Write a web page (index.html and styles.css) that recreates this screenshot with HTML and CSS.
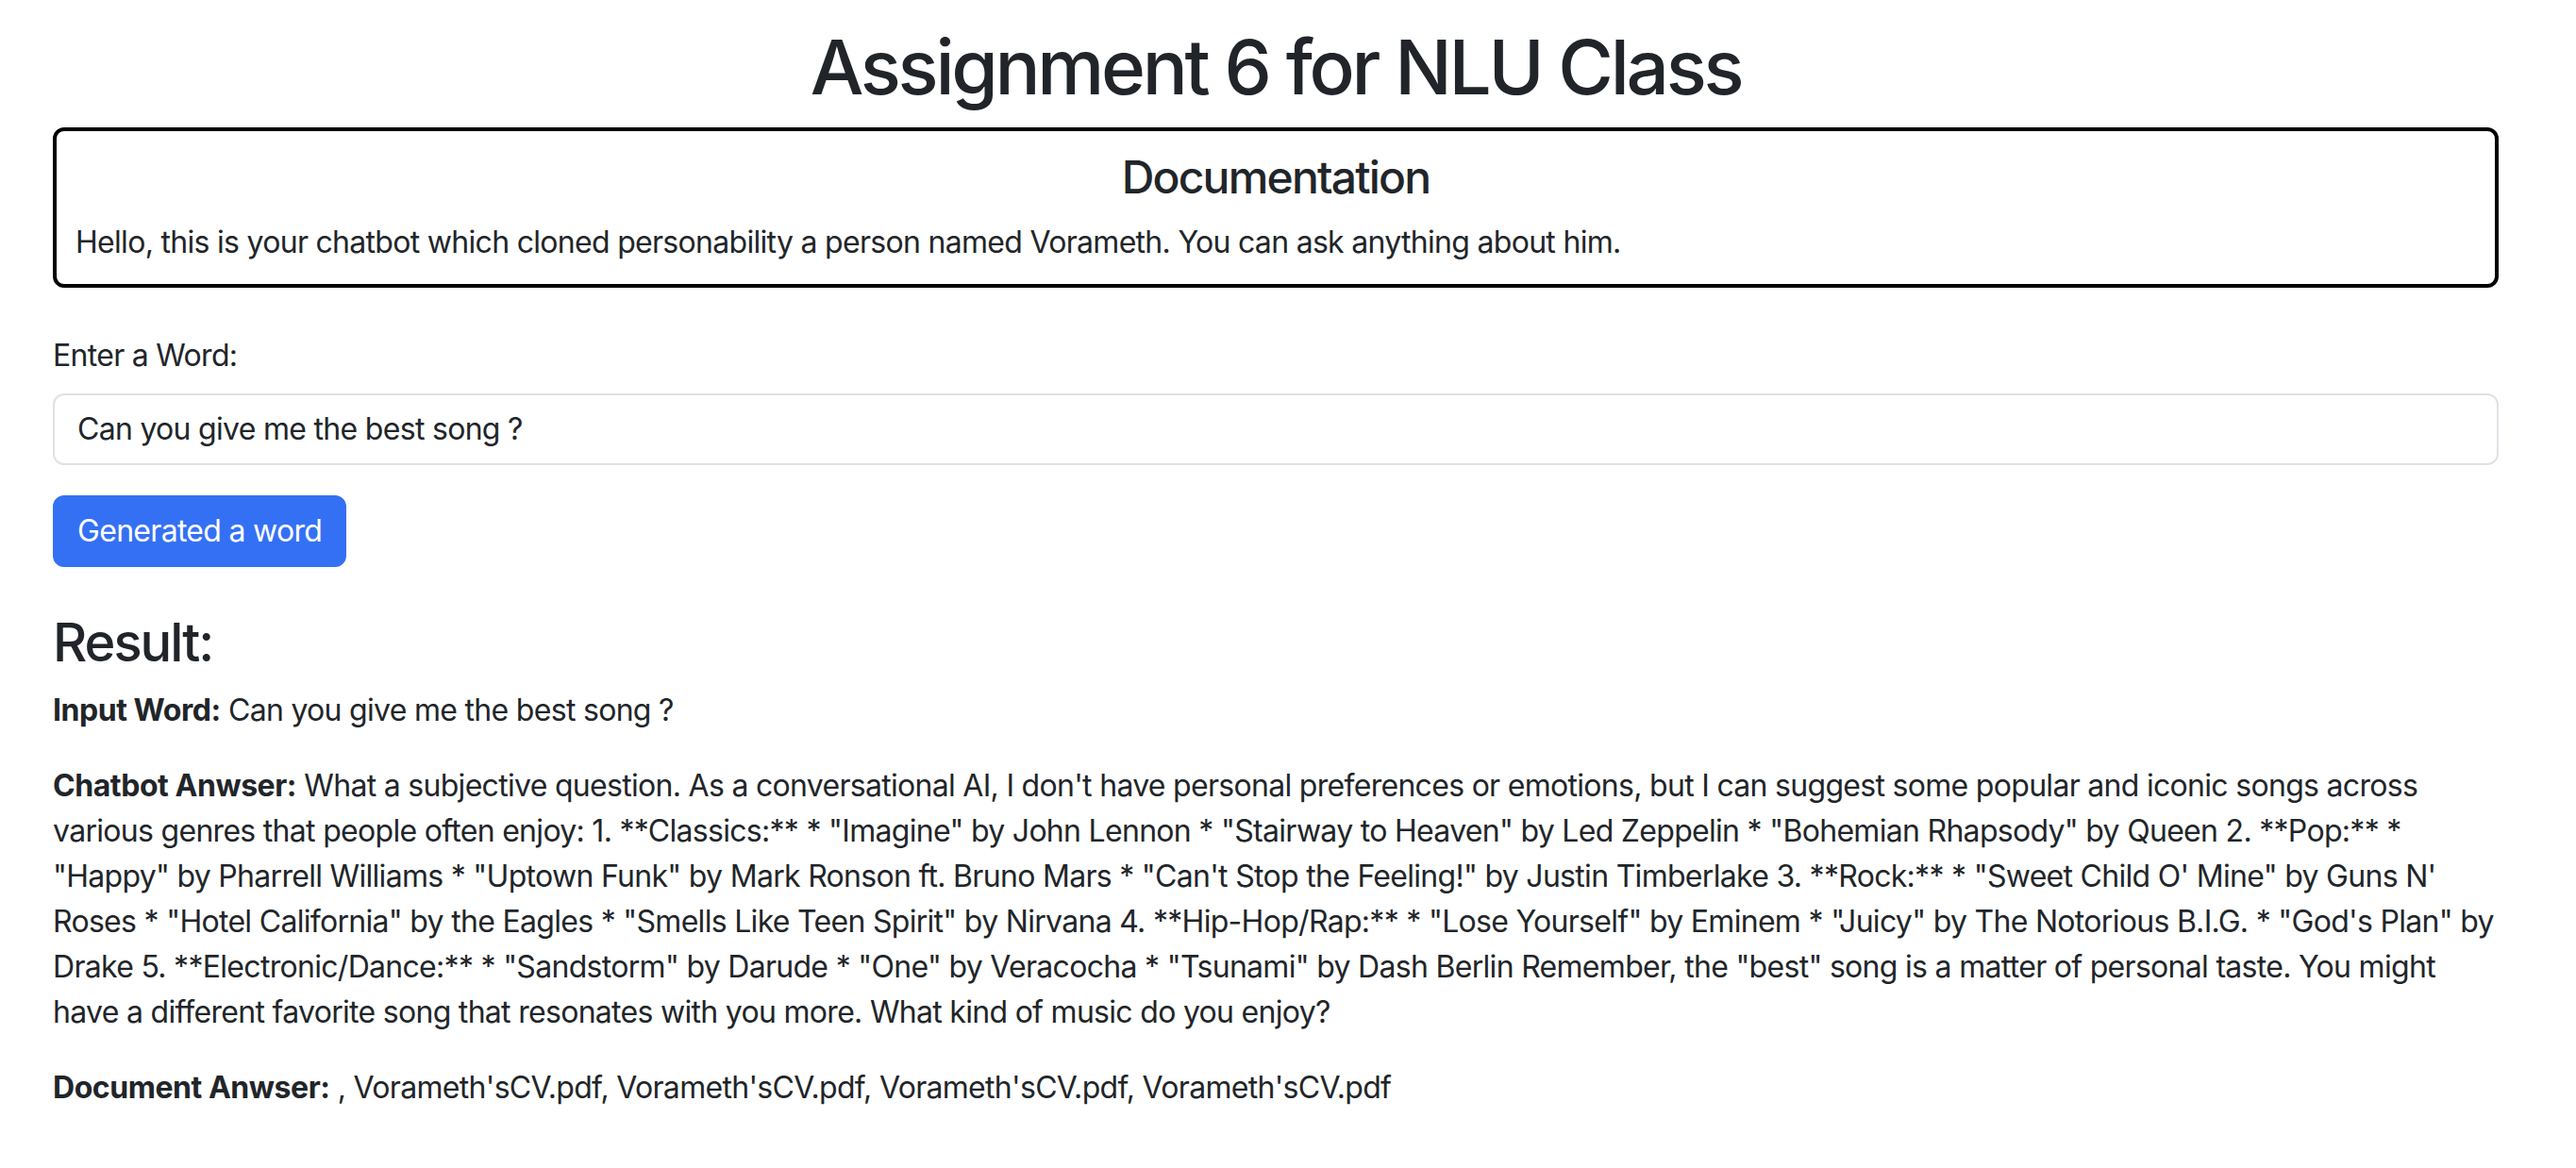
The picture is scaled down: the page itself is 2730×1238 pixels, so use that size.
FILE: index.html
```html
<!DOCTYPE html>
<html lang="en">
<head>
<meta charset="utf-8">
<title>Assignment 6 for NLU Class</title>
<link rel="stylesheet" href="styles.css">
</head>
<body>
<div class="page">
  <h1 class="title">Assignment 6 for NLU Class</h1>
  <div class="doc-box">
    <h4 class="doc-title">Documentation</h4>
    <p class="doc-text">Hello, this is your chatbot which cloned personability a person named Vorameth. You can ask anything about him.</p>
  </div>
  <form class="form">
    <label class="label" for="word">Enter a Word:</label>
    <input class="input" id="word" type="text" value="Can you give me the best song ?">
    <button class="btn" type="button">Generated a word</button>
  </form>
  <h3 class="result-title">Result:</h3>
  <p class="para"><strong>Input Word:</strong> Can you give me the best song ?</p>
  <p class="para answer"><strong>Chatbot Anwser:</strong> What a subjective question. As a conversational AI, I don't have personal preferences or emotions, but I can suggest some popular and iconic songs across<br>various genres that people often enjoy: 1. **Classics:** * "Imagine" by John Lennon * "Stairway to Heaven" by Led Zeppelin * "Bohemian Rhapsody" by Queen 2. **Pop:** *<br>"Happy" by Pharrell Williams * "Uptown Funk" by Mark Ronson ft. Bruno Mars * "Can't Stop the Feeling!" by Justin Timberlake 3. **Rock:** * "Sweet Child O' Mine" by Guns N'<br>Roses * "Hotel California" by the Eagles * "Smells Like Teen Spirit" by Nirvana 4. **Hip-Hop/Rap:** * "Lose Yourself" by Eminem * "Juicy" by The Notorious B.I.G. * "God's Plan" by<br>Drake 5. **Electronic/Dance:** * "Sandstorm" by Darude * "One" by Veracocha * "Tsunami" by Dash Berlin Remember, the "best" song is a matter of personal taste. You might<br>have a different favorite song that resonates with you more. What kind of music do you enjoy?</p>
  <p class="para"><strong>Document Anwser:</strong> , Vorameth'sCV.pdf, Vorameth'sCV.pdf, Vorameth'sCV.pdf, Vorameth'sCV.pdf</p>
</div>
</body>
</html>
```

FILE: styles.css
```css
* { box-sizing: border-box; }

html, body {
  margin: 0;
  background: #ffffff;
}

body {
  font-family: Inter, "Noto Sans", "Liberation Sans", sans-serif;
  font-size: 32px;
  line-height: 48px;
  letter-spacing: -0.7px;
  color: #212529;
}

.page {
  padding: 23px 82px 40px 56px;
}

.title {
  margin: 0 0 16px;
  font-size: 80px;
  line-height: 96px;
  font-weight: 500;
  letter-spacing: -3.3px;
  text-align: center;
}

.doc-box {
  border: 4px solid #000000;
  border-radius: 12px;
  padding: 20px;
  margin-bottom: 48px;
}

.doc-title {
  margin: 0 0 16px;
  font-size: 48px;
  line-height: 57.6px;
  font-weight: 500;
  letter-spacing: -1.8px;
  text-align: center;
}

.doc-text {
  margin: 0;
}

.form {
  display: flex;
  flex-direction: column;
  align-items: flex-start;
  margin: 0;
}

.label {
  display: block;
  margin-bottom: 16px;
}

.input {
  display: block;
  width: 100%;
  height: 76px;
  padding: 12px 24px;
  font-family: inherit;
  font-size: 32px;
  line-height: 48px;
  letter-spacing: -0.7px;
  color: #212529;
  background: #ffffff;
  border: 2px solid #dee2e6;
  border-radius: 12px;
  outline: none;
}

.btn {
  margin-top: 32px;
  height: 76px;
  padding: 12px 24px;
  font-family: inherit;
  font-size: 32px;
  line-height: 48px;
  letter-spacing: -0.7px;
  font-weight: 400;
  color: #ffffff;
  background: #3470f4;
  border: 2px solid #3470f4;
  border-radius: 12px;
}

.result-title {
  margin: 47px 0 14px;
  font-size: 56px;
  line-height: 67.2px;
  font-weight: 500;
  letter-spacing: -2px;
}

.para {
  margin: 0 0 32px;
}

.answer {
  white-space: nowrap;
}

.para strong {
  font-weight: 700;
  letter-spacing: -0.45px;
}
```
